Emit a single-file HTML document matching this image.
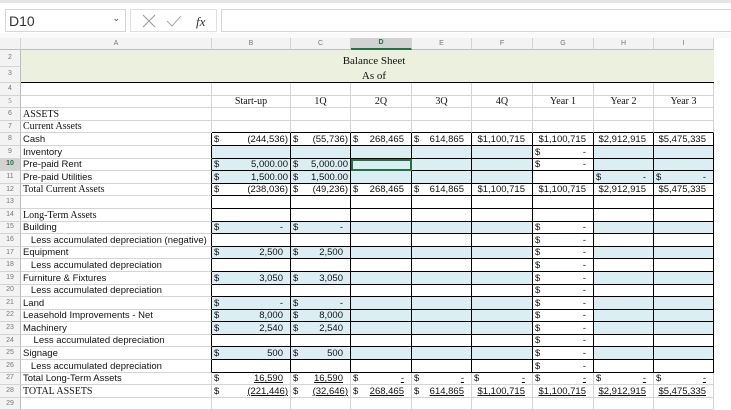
<!DOCTYPE html>
<html><head><meta charset="utf-8"><style>
*{box-sizing:border-box;margin:0;padding:0}
body{width:731px;height:407px;overflow:hidden;background:#fff;font-family:"Liberation Sans",Arial,sans-serif;position:relative}
.top{position:absolute;left:0;top:0;width:731px;height:3px;background:#e6e6e6}
.nb{position:absolute;left:5px;top:9px;width:121px;height:23px;border:1px solid #d6d6d6;font-size:14px;color:#333;padding:3px 0 0 3px}
.nb .ar{position:absolute;right:5px;top:3px;font-size:9px;color:#444}
.ib{position:absolute;left:130px;top:9px;width:87px;height:23px;border:1px solid #e0e0e0}
.fb{position:absolute;left:221px;top:9px;width:512px;height:23px;border:1px solid #d6d6d6}
.band{position:absolute;left:0;top:33px;width:731px;height:5px;background:#fafafa}
table{position:absolute;left:0;top:38px;border-collapse:separate;border-spacing:0;table-layout:fixed;width:714px}
td{border-right:1px solid #d4d4d4;border-bottom:1px solid #d4d4d4;height:12.6px;font-size:9.5px;line-height:10px;white-space:nowrap;overflow:hidden;padding:0 2px;text-align:right;color:#111;vertical-align:bottom}
td.n{background:#f3f3f3;color:#777;font-size:7px;text-align:center;padding:0;border-right:1px solid #bdbdbd;vertical-align:middle}
tr.h td{height:11px;background:#f3f3f3;color:#777;font-size:7px;text-align:center;border-bottom:1px solid #bdbdbd;vertical-align:middle}
tr.h td.sel{background:#d2d2d2;color:#217346;font-weight:bold;border-bottom:2px solid #217346}
td.a{text-align:left;padding-left:2px;overflow:visible}
.s{font-family:"Liberation Serif",serif;font-size:10px}
td i{float:left;font-style:normal}
.p{padding-right:7px}
.b{background:#dbeef4}
tr.k td.c{border-bottom:1px solid #000;border-right:1px solid #000}
tr.k td.a{border-right:1px solid #000}
tr.k7 td.c{border-bottom:1px solid #000}
.g td.t{background:#ebf1de;text-align:center;border-right:none}
.u{text-decoration:underline}
td.sel10{outline:2px solid #217346;outline-offset:-2px}
</style></head><body>
<div class="top"></div>
<div class="nb">D10<span class="ar">&#8964;</span></div>
<div class="ib">
<svg width="87" height="23" style="position:absolute;left:0;top:0"><path d="M12 5 L24 17 M24 5 L12 17" stroke="#999" stroke-width="1" fill="none"/><path d="M36 11 L41 16 L50 6" stroke="#aaa" stroke-width="1" fill="none"/><text x="65" y="16" font-family="Liberation Serif" font-style="italic" font-size="13" fill="#333">fx</text></svg>
</div>
<div class="fb"></div>
<div class="band"></div>
<table>
<colgroup><col style="width:21px"><col style="width:191px"><col style="width:79px"><col style="width:60px"><col style="width:61px"><col style="width:60px"><col style="width:61px"><col style="width:61px"><col style="width:60px"><col style="width:60px"></colgroup>
<tr class="h"><td></td><td>A</td><td>B</td><td>C</td><td class="sel">D</td><td>E</td><td>F</td><td>G</td><td>H</td><td>I</td></tr>
<tr class="g"><td class="n" style="height:16.5px">2</td><td class="t s" colspan="9" style="border-bottom:none;font-size:11px;padding-left:15px;padding-bottom:1px">Balance Sheet</td></tr>
<tr class="g"><td class="n" style="height:16.5px">3</td><td class="t s" colspan="9" style="border-bottom:1px solid #000;font-size:11px;padding-left:15px;padding-bottom:1px">As of</td></tr>
<tr><td class="n">4</td><td></td><td></td><td></td><td></td><td></td><td></td><td></td><td></td><td></td></tr>
<tr class="s"><td class="n">5</td><td></td><td style="text-align:center" class="s">Start-up</td><td style="text-align:center" class="s">1Q</td><td style="text-align:center" class="s">2Q</td><td style="text-align:center" class="s">3Q</td><td style="text-align:center" class="s">4Q</td><td style="text-align:center" class="s">Year 1</td><td style="text-align:center" class="s">Year 2</td><td style="text-align:center" class="s">Year 3</td></tr>
<tr><td class="n">6</td><td class="a s">ASSETS</td><td></td><td></td><td></td><td></td><td></td><td></td><td></td><td></td></tr>
<tr class="k7"><td class="n">7</td><td class="a s">Current Assets</td><td class="c"></td><td class="c"></td><td class="c"></td><td class="c"></td><td class="c"></td><td class="c"></td><td class="c"></td><td class="c"></td></tr>
<tr class="k"><td class="n">8</td><td class="a">Cash</td><td class="c"><i>$</i>(244,536)</td><td class="c"><i>$</i>(55,736)</td><td class="c p"><i>$</i>268,465</td><td class="c p"><i>$</i>614,865</td><td class="c p">$1,100,715</td><td class="c p">$1,100,715</td><td class="c p">$2,912,915</td><td class="c p">$5,475,335</td></tr>
<tr class="k"><td class="n">9</td><td class="a">Inventory</td><td class="c b"></td><td class="c b"></td><td class="c b"></td><td class="c b"></td><td class="c b"></td><td class="c p"><i>$</i>-</td><td class="c b"></td><td class="c b"></td></tr>
<tr class="k"><td class="n" style="background:#d2d2d2;color:#217346;font-weight:bold">10</td><td class="a">Pre-paid Rent</td><td class="c b"><i>$</i>5,000.00</td><td class="c b"><i>$</i>5,000.00</td><td class="c b sel10"></td><td class="c b"></td><td class="c b"></td><td class="c p"><i>$</i>-</td><td class="c b"></td><td class="c b"></td></tr>
<tr class="k"><td class="n">11</td><td class="a">Pre-paid Utilities</td><td class="c b"><i>$</i>1,500.00</td><td class="c b"><i>$</i>1,500.00</td><td class="c b"></td><td class="c b"></td><td class="c b"></td><td class="c"></td><td class="c b p"><i>$</i>-</td><td class="c b p"><i>$</i>-</td></tr>
<tr class="k"><td class="n">12</td><td class="a s">Total Current Assets</td><td class="c"><i>$</i>(238,036)</td><td class="c"><i>$</i>(49,236)</td><td class="c p"><i>$</i>268,465</td><td class="c p"><i>$</i>614,865</td><td class="c p">$1,100,715</td><td class="c p">$1,100,715</td><td class="c p">$2,912,915</td><td class="c p">$5,475,335</td></tr>
<tr class="k"><td class="n">13</td><td class="a"></td><td class="c"></td><td class="c"></td><td class="c"></td><td class="c"></td><td class="c"></td><td class="c"></td><td class="c"></td><td class="c"></td></tr>
<tr class="k"><td class="n">14</td><td class="a s">Long-Term Assets</td><td class="c"></td><td class="c"></td><td class="c"></td><td class="c"></td><td class="c"></td><td class="c"></td><td class="c"></td><td class="c"></td></tr>
<tr class="k"><td class="n">15</td><td class="a">Building</td><td class="c b p"><i>$</i>-</td><td class="c b p"><i>$</i>-</td><td class="c b"></td><td class="c b"></td><td class="c b"></td><td class="c p"><i>$</i>-</td><td class="c b"></td><td class="c b"></td></tr>
<tr class="k"><td class="n">16</td><td class="a">&nbsp;&nbsp;&nbsp;Less accumulated depreciation (negative)</td><td class="c"></td><td class="c"></td><td class="c"></td><td class="c"></td><td class="c"></td><td class="c p"><i>$</i>-</td><td class="c"></td><td class="c"></td></tr>
<tr class="k"><td class="n">17</td><td class="a">Equipment</td><td class="c b p"><i>$</i>2,500</td><td class="c b p"><i>$</i>2,500</td><td class="c b"></td><td class="c b"></td><td class="c b"></td><td class="c p"><i>$</i>-</td><td class="c b"></td><td class="c b"></td></tr>
<tr class="k"><td class="n">18</td><td class="a">&nbsp;&nbsp;&nbsp;Less accumulated depreciation</td><td class="c"></td><td class="c"></td><td class="c"></td><td class="c"></td><td class="c"></td><td class="c p"><i>$</i>-</td><td class="c"></td><td class="c"></td></tr>
<tr class="k"><td class="n">19</td><td class="a">Furniture &amp; Fixtures</td><td class="c b p"><i>$</i>3,050</td><td class="c b p"><i>$</i>3,050</td><td class="c b"></td><td class="c b"></td><td class="c b"></td><td class="c p"><i>$</i>-</td><td class="c b"></td><td class="c b"></td></tr>
<tr class="k"><td class="n">20</td><td class="a">&nbsp;&nbsp;&nbsp;Less accumulated depreciation</td><td class="c"></td><td class="c"></td><td class="c"></td><td class="c"></td><td class="c"></td><td class="c p"><i>$</i>-</td><td class="c"></td><td class="c"></td></tr>
<tr class="k"><td class="n">21</td><td class="a">Land</td><td class="c b p"><i>$</i>-</td><td class="c b p"><i>$</i>-</td><td class="c b"></td><td class="c b"></td><td class="c b"></td><td class="c p"><i>$</i>-</td><td class="c b"></td><td class="c b"></td></tr>
<tr class="k"><td class="n">22</td><td class="a">Leasehold Improvements - Net</td><td class="c b p"><i>$</i>8,000</td><td class="c b p"><i>$</i>8,000</td><td class="c b"></td><td class="c b"></td><td class="c b"></td><td class="c p"><i>$</i>-</td><td class="c b"></td><td class="c b"></td></tr>
<tr class="k"><td class="n">23</td><td class="a">Machinery</td><td class="c b p"><i>$</i>2,540</td><td class="c b p"><i>$</i>2,540</td><td class="c b"></td><td class="c b"></td><td class="c b"></td><td class="c p"><i>$</i>-</td><td class="c b"></td><td class="c b"></td></tr>
<tr class="k"><td class="n">24</td><td class="a">&nbsp;&nbsp;&nbsp;&nbsp;Less accumulated depreciation</td><td class="c"></td><td class="c"></td><td class="c"></td><td class="c"></td><td class="c"></td><td class="c p"><i>$</i>-</td><td class="c"></td><td class="c"></td></tr>
<tr class="k"><td class="n">25</td><td class="a">Signage</td><td class="c b p"><i>$</i>500</td><td class="c b p"><i>$</i>500</td><td class="c b"></td><td class="c b"></td><td class="c b"></td><td class="c p"><i>$</i>-</td><td class="c b"></td><td class="c b"></td></tr>
<tr class="k"><td class="n">26</td><td class="a">&nbsp;&nbsp;&nbsp;Less accumulated depreciation</td><td class="c"></td><td class="c"></td><td class="c"></td><td class="c"></td><td class="c"></td><td class="c p"><i>$</i>-</td><td class="c"></td><td class="c"></td></tr>
<tr><td class="n">27</td><td class="a">Total Long-Term Assets</td><td class="p u"><i>$</i>16,590</td><td class="p u"><i>$</i>16,590</td><td class="p u"><i>$</i>-</td><td class="p u"><i>$</i>-</td><td class="p u"><i>$</i>-</td><td class="p u"><i>$</i>-</td><td class="p u"><i>$</i>-</td><td class="p u"><i>$</i>-</td></tr>
<tr><td class="n">28</td><td class="a s">TOTAL ASSETS</td><td class="u"><i>$</i>(221,446)</td><td class="u"><i>$</i>(32,646)</td><td class="p u"><i>$</i>268,465</td><td class="p u"><i>$</i>614,865</td><td class="p u">$1,100,715</td><td class="p u">$1,100,715</td><td class="p u">$2,912,915</td><td class="p u">$5,475,335</td></tr>
<tr><td class="n">29</td><td></td><td></td><td></td><td></td><td></td><td></td><td></td><td></td><td></td></tr>
</table>
</body></html>
